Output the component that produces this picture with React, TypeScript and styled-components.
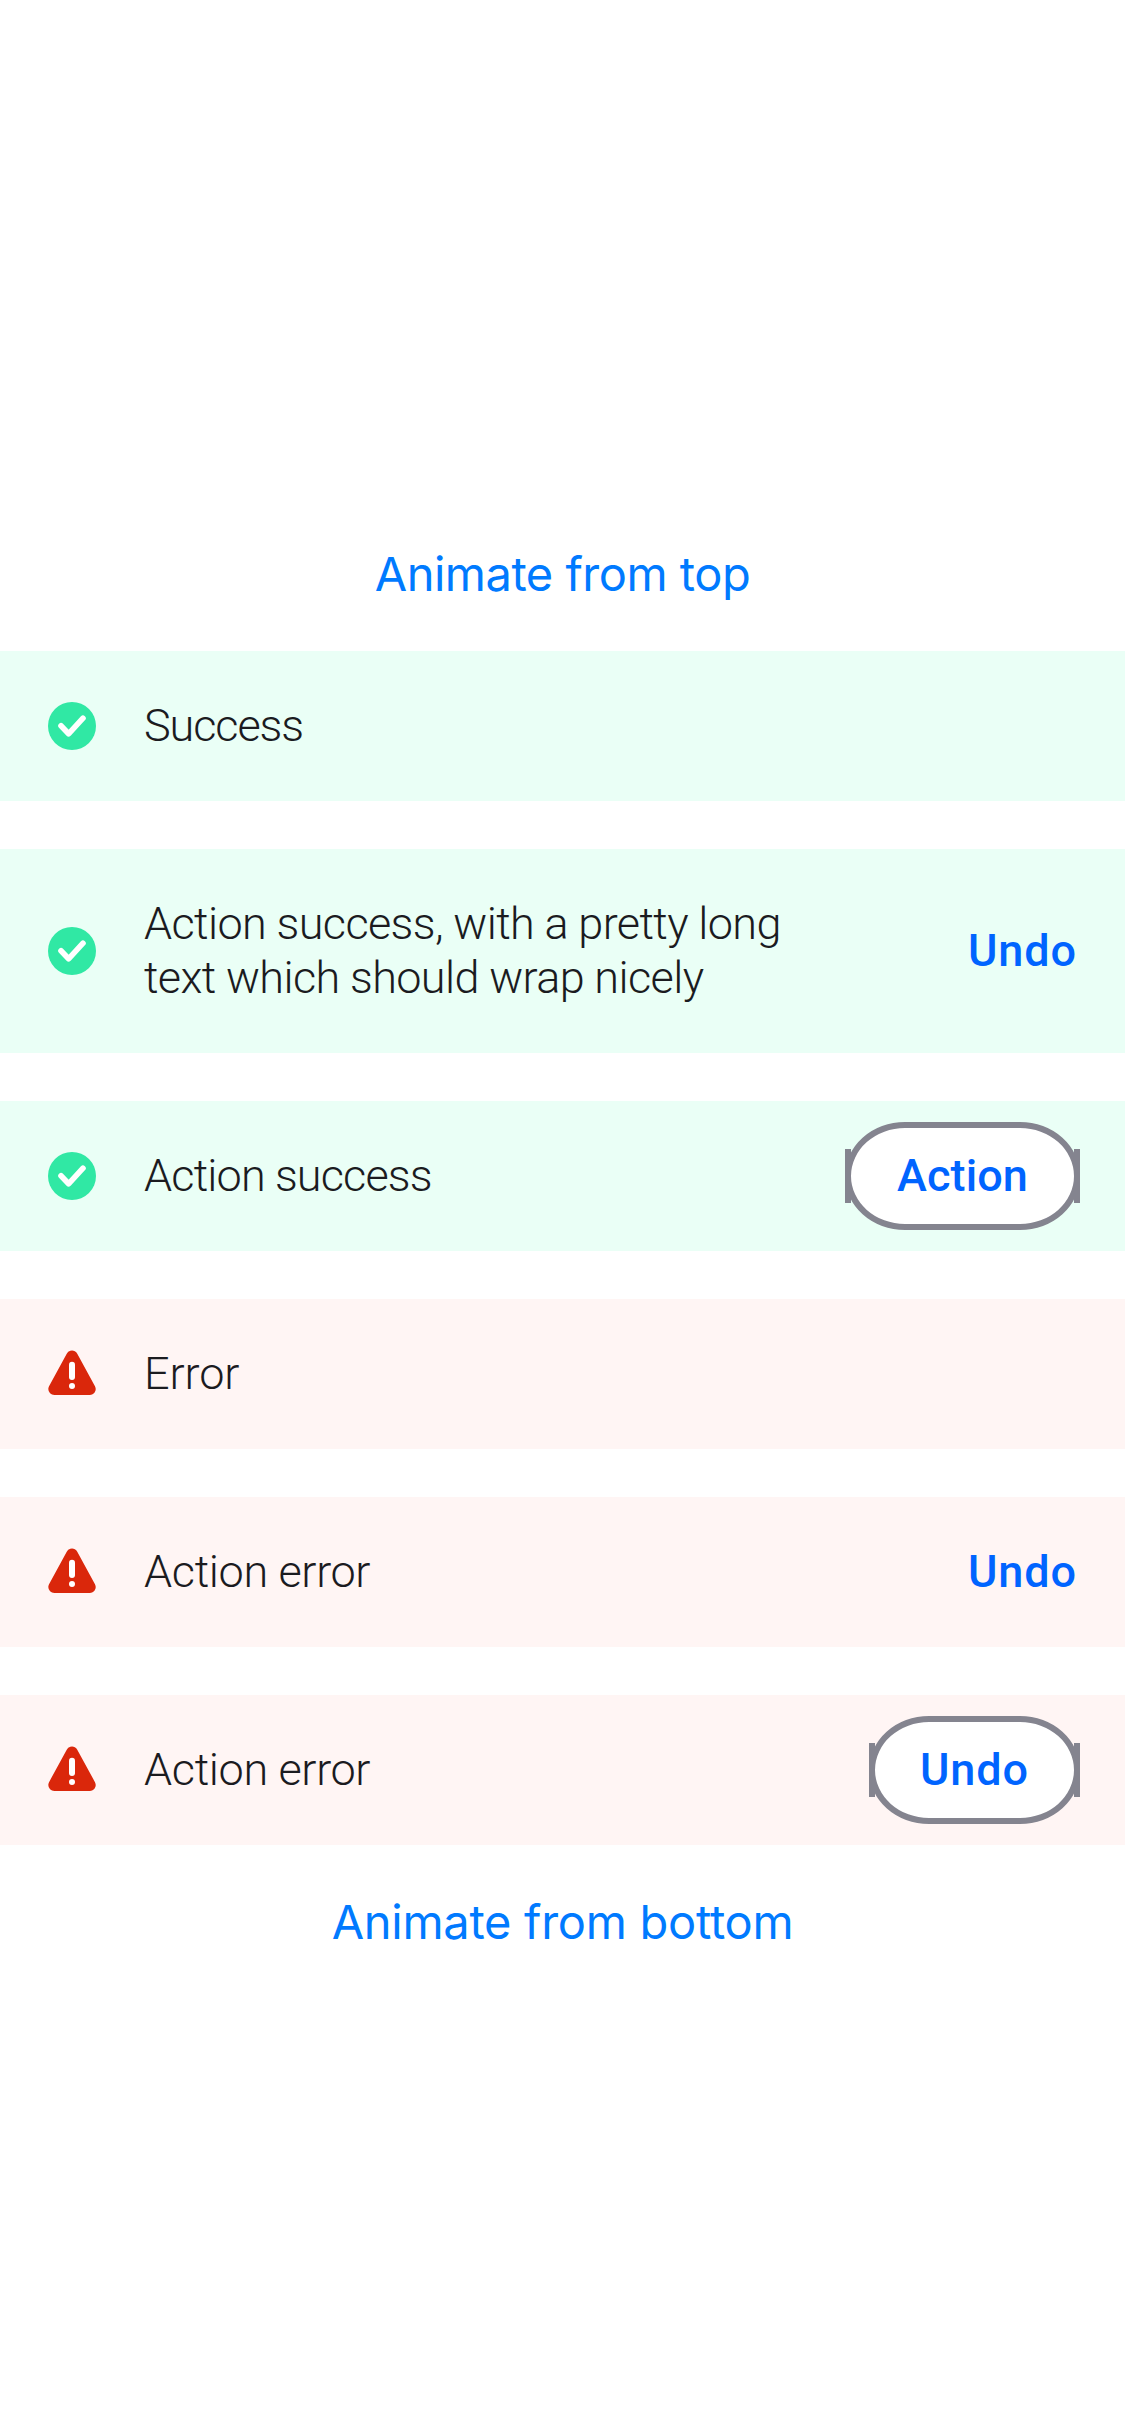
import React from 'react';
import styled, { createGlobalStyle } from 'styled-components';

type Tone = 'success' | 'error';

const GlobalStyle = createGlobalStyle`
  body {
    margin: 0;
    background: #ffffff;
  }
`;

const Screen = styled.main`
  box-sizing: border-box;
  width: 1125px;
  height: 2436px;
  display: flex;
  flex-direction: column;
  padding-top: 532px;
  font-family: Roboto, "Liberation Sans", sans-serif;
  background: #ffffff;
`;

const LinkButton = styled.button<{ $tracking: number }>`
  border: 0;
  padding: 0;
  height: 84px;
  background: none;
  color: #007aff;
  font-family: Inter, "Liberation Sans", sans-serif;
  font-size: 47px;
  line-height: 84px;
  letter-spacing: ${p => p.$tracking}px;
  text-align: center;
`;

const Stack = styled.section`
  display: flex;
  flex-direction: column;
  gap: 48px;
  margin: 35px 0;
`;

const Banner = styled.div<{ $tone: Tone }>`
  display: flex;
  align-items: center;
  box-sizing: border-box;
  min-height: 150px;
  padding: 0 48px;
  background: ${p => (p.$tone === 'success' ? '#eafff6' : '#fff5f4')};
`;

const Icon = styled.svg`
  flex: none;
  width: 48px;
  height: 48px;
  margin-right: 48px;
`;

const Message = styled.p<{ $tracking: number }>`
  flex: 1;
  max-width: 680px;
  margin: 0 auto 0 0;
  padding: 48px 0;
  color: #1b1b1f;
  font-size: 45px;
  font-weight: 330;
  line-height: 54px;
  letter-spacing: ${p => p.$tracking}px;
`;

const Action = styled.button<{ $tracking: number }>`
  border: 0;
  padding: 0;
  background: none;
  color: #0064ff;
  font-family: inherit;
  font-size: 45px;
  font-weight: 500;
  line-height: 54px;
  letter-spacing: ${p => p.$tracking}px;
`;

const PillAction = styled(Action)<{ $width: number }>`
  position: relative;
  box-sizing: border-box;
  width: ${p => p.$width}px;
  height: 108px;
  margin-right: -3px;
  border: 6px solid #84848f;
  border-radius: 60px / 54px;
  background: #ffffff;

  &::before,
  &::after {
    content: '';
    position: absolute;
    top: 21px;
    width: 6px;
    height: 54px;
    background: #84848f;
  }
  &::before {
    left: -6px;
  }
  &::after {
    right: -6px;
  }
`;

const ToneIcon = ({ tone }: { tone: Tone }) =>
  tone === 'success' ? (
    <Icon viewBox="0 0 48 48">
      <circle cx="24" cy="24" r="24" fill="#30e8a4" />
      <path d="M13 23.8L20.6 31.8L35 16.2" fill="none" stroke="#fff" strokeWidth="5.6" strokeLinecap="round" strokeLinejoin="round" />
    </Icon>
  ) : (
    <Icon viewBox="0 0 48 48">
      <path d="M24 6.5L41.7 39H6.3Z" fill="#da270b" stroke="#da270b" strokeWidth="12" strokeLinejoin="round" />
      <path d="M24 14.8V27" stroke="#fff" strokeWidth="6" strokeLinecap="round" />
      <circle cx="24" cy="36" r="3" fill="#fff" />
    </Icon>
  );

interface Notice {
  tone: Tone;
  text: string;
  tracking: number;
  action?: string;
  pillWidth?: number;
}

const notices: Notice[] = [
  { tone: 'success', text: 'Success', tracking: -1.1 },
  { tone: 'success', text: 'Action success, with a pretty long text which should wrap nicely', tracking: -0.62, action: 'Undo' },
  { tone: 'success', text: 'Action success', tracking: -0.85, action: 'Action', pillWidth: 235 },
  { tone: 'error', text: 'Error', tracking: -0.1 },
  { tone: 'error', text: 'Action error', tracking: -0.35, action: 'Undo' },
  { tone: 'error', text: 'Action error', tracking: -0.35, action: 'Undo', pillWidth: 211 },
];

const actionTracking = (label: string) => (label === 'Undo' ? 0.9 : 0.1);

export default function App() {
  return (
    <>
      <GlobalStyle />
      <Screen>
        <LinkButton $tracking={-0.5}>Animate from top</LinkButton>
        <Stack>
          {notices.map((n, i) => (
            <Banner key={i} $tone={n.tone}>
              <ToneIcon tone={n.tone} />
              <Message $tracking={n.tracking}>{n.text}</Message>
              {n.action &&
                (n.pillWidth ? (
                  <PillAction $width={n.pillWidth} $tracking={actionTracking(n.action)}>
                    {n.action}
                  </PillAction>
                ) : (
                  <Action $tracking={actionTracking(n.action)}>{n.action}</Action>
                ))}
            </Banner>
          ))}
        </Stack>
        <LinkButton $tracking={-0.28}>Animate from bottom</LinkButton>
      </Screen>
    </>
  );
}
